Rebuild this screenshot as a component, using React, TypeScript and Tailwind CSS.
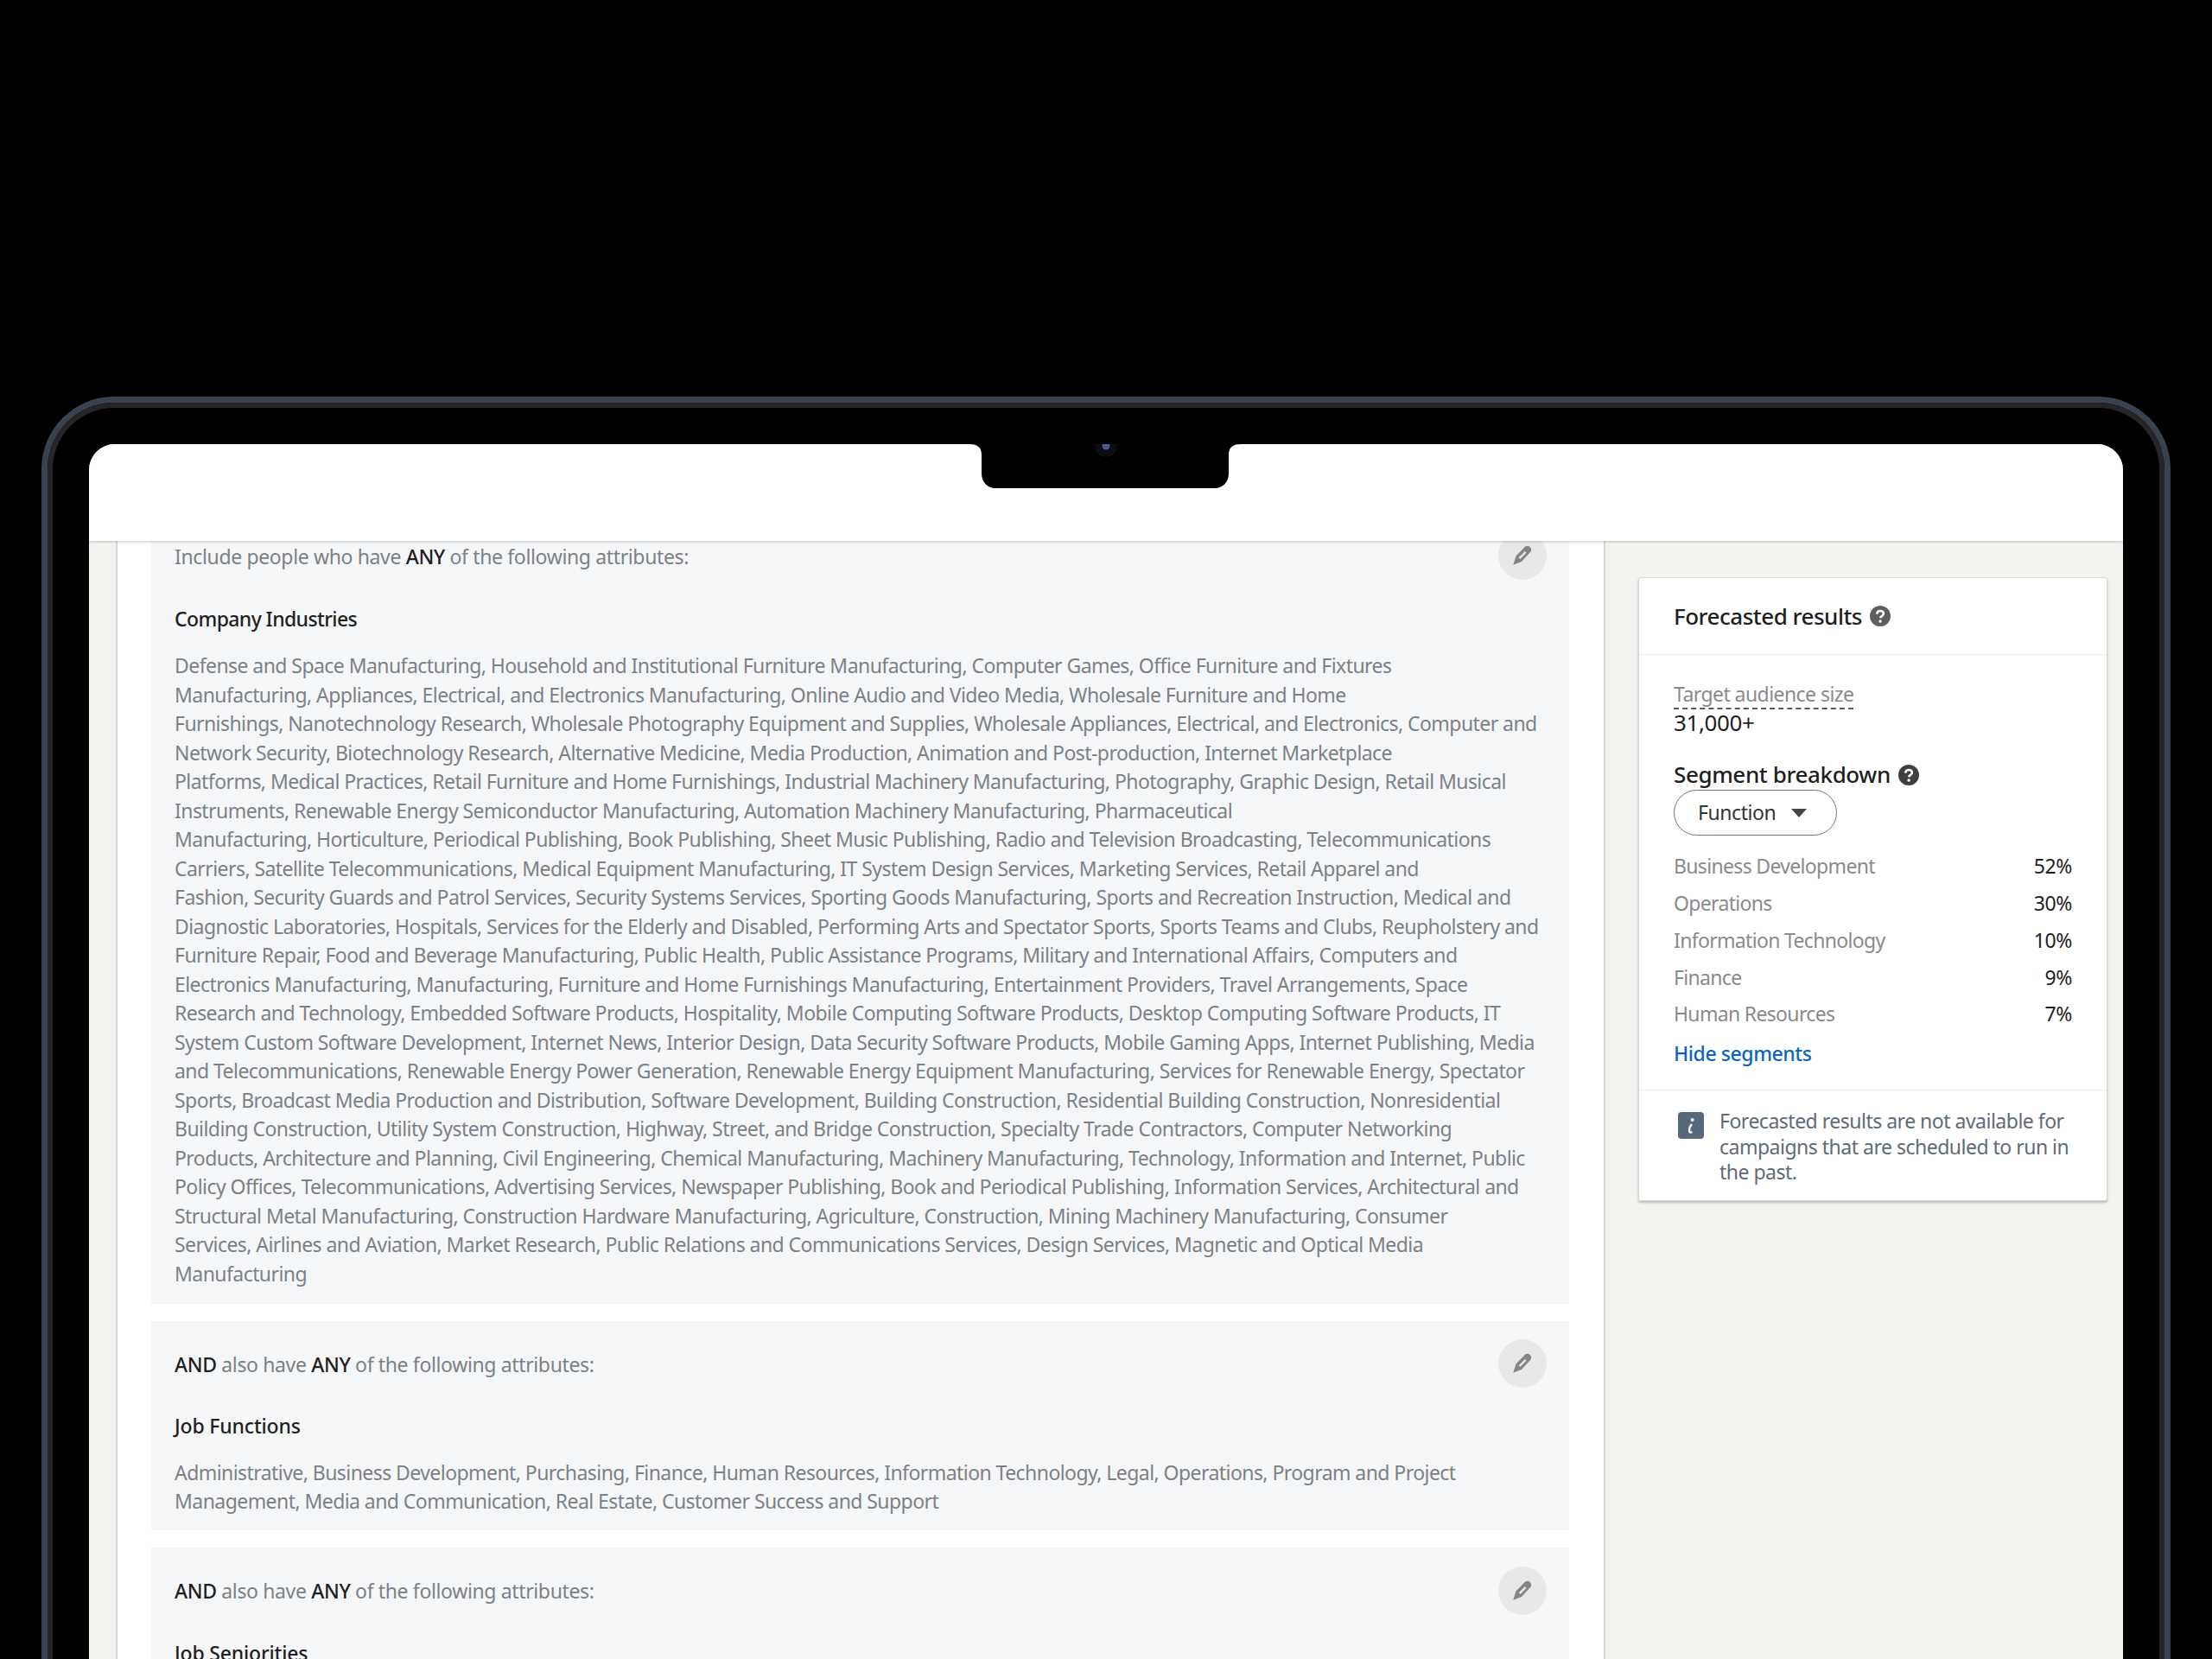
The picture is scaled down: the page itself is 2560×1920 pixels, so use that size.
const industries = [
  "Defense and Space Manufacturing, Household and Institutional Furniture Manufacturing, Computer Games, Office Furniture and Fixtures",
  "Manufacturing, Appliances, Electrical, and Electronics Manufacturing, Online Audio and Video Media, Wholesale Furniture and Home",
  "Furnishings, Nanotechnology Research, Wholesale Photography Equipment and Supplies, Wholesale Appliances, Electrical, and Electronics, Computer and",
  "Network Security, Biotechnology Research, Alternative Medicine, Media Production, Animation and Post-production, Internet Marketplace",
  "Platforms, Medical Practices, Retail Furniture and Home Furnishings, Industrial Machinery Manufacturing, Photography, Graphic Design, Retail Musical",
  "Instruments, Renewable Energy Semiconductor Manufacturing, Automation Machinery Manufacturing, Pharmaceutical",
  "Manufacturing, Horticulture, Periodical Publishing, Book Publishing, Sheet Music Publishing, Radio and Television Broadcasting, Telecommunications",
  "Carriers, Satellite Telecommunications, Medical Equipment Manufacturing, IT System Design Services, Marketing Services, Retail Apparel and",
  "Fashion, Security Guards and Patrol Services, Security Systems Services, Sporting Goods Manufacturing, Sports and Recreation Instruction, Medical and",
  "Diagnostic Laboratories, Hospitals, Services for the Elderly and Disabled, Performing Arts and Spectator Sports, Sports Teams and Clubs, Reupholstery and",
  "Furniture Repair, Food and Beverage Manufacturing, Public Health, Public Assistance Programs, Military and International Affairs, Computers and",
  "Electronics Manufacturing, Manufacturing, Furniture and Home Furnishings Manufacturing, Entertainment Providers, Travel Arrangements, Space",
  "Research and Technology, Embedded Software Products, Hospitality, Mobile Computing Software Products, Desktop Computing Software Products, IT",
  "System Custom Software Development, Internet News, Interior Design, Data Security Software Products, Mobile Gaming Apps, Internet Publishing, Media",
  "and Telecommunications, Renewable Energy Power Generation, Renewable Energy Equipment Manufacturing, Services for Renewable Energy, Spectator",
  "Sports, Broadcast Media Production and Distribution, Software Development, Building Construction, Residential Building Construction, Nonresidential",
  "Building Construction, Utility System Construction, Highway, Street, and Bridge Construction, Specialty Trade Contractors, Computer Networking",
  "Products, Architecture and Planning, Civil Engineering, Chemical Manufacturing, Machinery Manufacturing, Technology, Information and Internet, Public",
  "Policy Offices, Telecommunications, Advertising Services, Newspaper Publishing, Book and Periodical Publishing, Information Services, Architectural and",
  "Structural Metal Manufacturing, Construction Hardware Manufacturing, Agriculture, Construction, Mining Machinery Manufacturing, Consumer",
  "Services, Airlines and Aviation, Market Research, Public Relations and Communications Services, Design Services, Magnetic and Optical Media",
  "Manufacturing",
];

const functions = [
  "Administrative, Business Development, Purchasing, Finance, Human Resources, Information Technology, Legal, Operations, Program and Project",
  "Management, Media and Communication, Real Estate, Customer Success and Support",
];

const segments = [
  ["Business Development", "52%"],
  ["Operations", "30%"],
  ["Information Technology", "10%"],
  ["Finance", "9%"],
  ["Human Resources", "7%"],
];

function Pencil() {
  return (
    <span className="flex h-14 w-14 -my-[11px] shrink-0 items-center justify-center rounded-full bg-[#e8e8e9]">
      <svg width="28" height="28" viewBox="0 0 26 26">
        <path d="M3 23 L6 13.5 L15.5 3.8 C17 2.4 19.4 2.2 21 3.6 C22.8 5.2 22.9 7.8 21.4 9.4 L12 19.5 Z" fill="#858585" />
        <path d="M9 15.2 L15.6 8.4 L17.2 10 L10.6 16.8 Z" fill="#e8e8e9" />
      </svg>
    </span>
  );
}

function Help({ size, color }: { size: number; color: string }) {
  return (
    <svg width={size} height={size} viewBox="0 0 24 24" className="shrink-0">
      <circle cx="12" cy="12" r="12" fill={color} />
      <path d="M8.2 9.6 C8.4 7.2 10 6 12.1 6 C14.3 6 15.9 7.3 15.9 9.2 C15.9 11.6 12.6 11.8 12.2 14.2" fill="none" stroke="#fff" strokeWidth="2.6" />
      <circle cx="12.1" cy="18" r="1.7" fill="#fff" />
    </svg>
  );
}

function Intro({ first }: { first: string }) {
  const lead = first === "Include" ? (
    <span>Include people who have </span>
  ) : (
    <span>
      <b className="font-medium text-[#1f1f1f]">AND</b> also have{" "}
    </span>
  );
  return (
    <div className="flex items-center justify-between leading-[33.5px]">
      <div className="pt-[3px] tracking-[-0.36px] text-[#7c8186]">
        {lead}
        <b className="font-medium text-[#1f1f1f]">ANY</b> of the following attributes:
      </div>
      <Pencil />
    </div>
  );
}

function Block({ intro, title, lines, pb, titleTrack, titleGap, gap }: { intro: string; title: string; lines: string[]; pb: string; titleTrack: string; titleGap: string; gap: string }) {
  return (
    <section className={`bg-[#f5f6f8] pl-[27px] pr-[26px] pt-[31px] ${pb}`}>
      <Intro first={intro} />
      <h3 className={`${titleGap} font-medium leading-[33.5px] text-[#1f1f1f] ${titleTrack}`}>{title}</h3>
      <div className={`${gap} leading-[33.5px] tracking-[-0.56px] text-[#7c8186]`}>
        {lines.map((l, i) => (
          <div key={i} className="whitespace-nowrap">
            {l}
          </div>
        ))}
      </div>
    </section>
  );
}

export default function App() {
  return (
    <div className="h-[1920px] overflow-hidden bg-black font-['Noto_Sans','Open_Sans',sans-serif] text-[23px]">
      <div className="pt-[459px] px-12">
        <div className="h-[1600px] rounded-t-[84px] border-x-[7px] border-t-[7px] border-[#3a4250]">
          <div className="h-full rounded-t-[77px] border-x-[6px] border-t-[6px] border-[#262626] bg-black px-[42px] pt-[42px]">
            <div className="relative h-full overflow-hidden rounded-t-[30px] bg-[#f3f2ef]">
              <header className="relative z-10 h-[112px] bg-white shadow-[0_1px_3px_rgba(0,0,0,0.22)]">
                <svg width="314" height="52" viewBox="0 0 314 52" className="absolute left-[1019px] top-0">
                  <path d="M0 0 H314 C306 0 300 3 300 12 V34 C300 44 293 51 284 51 H30 C21 51 14 44 14 34 V12 C14 3 8 0 0 0 Z" fill="#000" />
                  <circle cx="158" cy="2" r="13" fill="#0d0e12" />
                  <circle cx="158" cy="2" r="4.5" fill="#47609c" />
                </svg>
              </header>
              <div className="flex h-full items-start pl-[31px]">
                <main className="w-[1724px] shrink-0 border-x-2 border-[#d2d2d2] bg-white pl-[39px] pr-[40px] pb-[40px] -mt-[32px]">
                  <div className="flex flex-col gap-[20px]">
                    <Block intro="Include" title="Company Industries" lines={industries} pb="pb-[17.5px]" titleTrack="tracking-[-0.6px]" titleGap="mt-[38.75px]" gap="mt-[20.5px]" />
                    <Block intro="AND" title="Job Functions" lines={functions} pb="pb-[16.5px]" titleTrack="tracking-[-0.17px]" titleGap="mt-[38px]" gap="mt-[20px]" />
                    <Block intro="AND" title="Job Seniorities" lines={["Director, Manager, Senior, Owner"]} pb="pb-[16px]" titleTrack="tracking-[-0.17px]" titleGap="mt-[38px]" gap="mt-[20px]" />
                  </div>
                </main>
                <aside className="ml-[38px] mt-[42px] w-[543px] shrink-0 rounded-[3px] border border-[#d6d6d6] bg-white shadow-[0_2px_3px_rgba(0,0,0,0.22)]">
                  <div className="flex h-[89px] items-center gap-[9px] border-b border-[#eeeeee] px-10">
                    <span className="text-[26px] font-medium tracking-[-0.5px] text-[#1f1f1f]">Forecasted results</span>
                    <Help size={24} color="#5e5e5e" />
                  </div>
                  <div className="px-10 pb-[25.5px] pt-[28px]">
                    <div className="inline-block border-b-2 border-dashed border-[#5a5a5a] leading-[32px] tracking-[-0.56px] text-[#8a8a8a]">Target audience size</div>
                    <div className="text-[26px] leading-[30px] tracking-[-0.4px] text-[#1f1f1f]">31,000+</div>
                    <div className="mt-[28px] flex items-center gap-[9px] leading-[34px]">
                      <span className="text-[26px] font-medium tracking-[-0.4px] text-[#1f1f1f]">Segment breakdown</span>
                      <span className="pt-[2px]"><Help size={24} color="#3f3f3f" /></span>
                    </div>
                    <div className="mt-[1px] flex h-[53px] w-[189px] items-center gap-[18px] rounded-full border-[1.5px] border-[#747474] pl-[27px]">
                      <span className="tracking-[-0.42px] text-[#333]">Function</span>
                      <svg width="18" height="10" viewBox="0 0 18 10"><path d="M0 0 H18 L9 10 Z" fill="#444" /></svg>
                    </div>
                    <div className="mt-[14px]">
                      {segments.map(([name, value]) => (
                        <div key={name} className="flex h-[42.8px] items-center justify-between tracking-[-0.67px]">
                          <span className="text-[#8a8a8a]">{name}</span>
                          <span className="tracking-[-0.42px] text-[#1f1f1f]">{value}</span>
                        </div>
                      ))}
                    </div>
                    <div className="mt-[7px] font-medium leading-[34px] tracking-[-0.42px] text-[#0a66c2]">Hide segments</div>
                  </div>
                  <div className="flex gap-[18px] border-t border-[#eeeeee] pb-[17.5px] pl-[45px] pr-4 pt-[21px]">
                    <span className="mt-[4px] flex h-[31px] w-[30px] shrink-0 items-center justify-center rounded-[4px] bg-[#56687a]">
                      <svg width="12" height="20" viewBox="0 0 12 20">
                        <circle cx="7.6" cy="3" r="2" fill="#fff" />
                        <path d="M7 8 C5 10 4 13 4 15.5 C4 17.5 5.5 18 7.5 17" fill="none" stroke="#fff" strokeWidth="2.4" />
                      </svg>
                    </span>
                    <p className="text-[23px] leading-[29.5px] tracking-[-0.5px] text-[#5d6b7a]">
                      Forecasted results are not available for
                      <br />
                      campaigns that are scheduled to run in
                      <br />
                      the past.
                    </p>
                  </div>
                </aside>
              </div>
            </div>
          </div>
        </div>
      </div>
    </div>
  );
}
